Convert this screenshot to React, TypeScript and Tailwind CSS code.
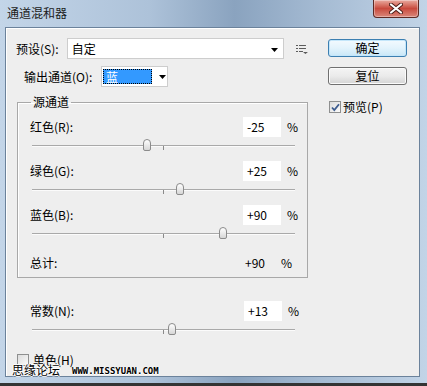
import React from "react";

// Photoshop "通道混和器" dialog on a Win7 Aero frame
const channels = [
  { label: "红色(R):", value: -25 },
  { label: "绿色(G):", value: 25 },
  { label: "蓝色(B):", value: 90 },
];

const fmt = (v: number) => (v > 0 ? `+${v}` : `${v}`);

const Arrow = ({ className = "" }: { className?: string }) => (
  <svg width="7" height="4" viewBox="0 0 7 4" className={className}>
    <path d="M0 0h7L3.5 4z" fill="#000" />
  </svg>
);

const Slider = ({ value }: { value: number }) => {
  const left = Math.round(((value + 200) / 400) * 263 - 4);
  return (
    <div className="relative ml-[14px] h-[24px] w-[263px]">
      <div className="absolute left-0 right-0 top-[8px] h-px bg-[#a9a9a9]" />
      <div className="absolute left-0 right-0 top-[9px] h-px bg-[#fbfbfb]" />
      <div className="absolute left-[131px] top-[9px] h-[4px] w-px bg-[#8a8a8a]" />
      <div
        className="absolute top-[2px] h-[12px] w-[8px] rounded-t-[4px] rounded-b-[2px] border border-[#8b8b8b] bg-gradient-to-b from-white to-[#d6d6d6]"
        style={{ left }}
      />
    </div>
  );
};

const ValueRow = ({ label, value }: { label: string; value: number }) => (
  <div className="flex h-[20px] items-center pl-[12px]">
    <span className="flex-1">{label}</span>
    <div className="h-[20px] w-[38px] bg-white pl-[4px] leading-[20px]">{fmt(value)}</div>
    <span className="ml-[6px] w-[20px]">%</span>
  </div>
);

const CheckBox = ({ checked }: { checked?: boolean }) => (
  <div className="flex h-[12px] w-[12px] items-center justify-center border border-[#8e8f8f] bg-gradient-to-br from-[#dcdcdc] to-[#fbfbfb]">
    {checked && (
      <svg width="9" height="9" viewBox="0 0 9 9">
        <path d="M1 4.5l2.3 2.6L8 1.2" stroke="#3d5c8f" strokeWidth="1.8" fill="none" />
      </svg>
    )}
  </div>
);

export default function App() {
  return (
    <div className="relative flex h-[386px] w-[427px] flex-col overflow-hidden bg-[linear-gradient(90deg,#c3d5e8_0%,#adc2d9_35%,#8aa3bf_55%,#a5bbd3_75%,#c2d4e7_100%)] font-['Noto_Sans_CJK_SC',sans-serif] text-[12px] text-black">
      {/* title bar */}
      <div className="flex h-[27px] justify-between">
        <span className="pl-[7px] pt-[5px] text-[12px] leading-[16px] text-[#1b1b1b]">通道混和器</span>
        <div className="mr-[8px] flex h-[18px] w-[46px] items-center justify-center rounded-b-[4px] border border-t-0 border-[#5e2a24] bg-gradient-to-b from-[#e8aaa0] via-[#c8493d] to-[#d9867a] shadow-[inset_0_0_0_1px_rgba(255,255,255,0.35)]">
          <svg width="14" height="11" viewBox="0 0 14 11">
            <path d="M2 1.5l10 8M12 1.5l-10 8" stroke="#4a1c17" strokeWidth="4" strokeLinecap="round" />
            <path d="M2 1.5l10 8M12 1.5l-10 8" stroke="#fff" strokeWidth="2.2" strokeLinecap="round" />
          </svg>
        </div>
      </div>

      {/* client area */}
      <div className="ml-[5px] flex h-[350px] w-[415px] border border-[#6b829b] bg-[#eeeeee] shadow-[inset_1px_1px_0_#ffffff]">
        <div className="ml-[10px] flex w-[292px] flex-col">
          <div className="mt-[10px] flex h-[21px] items-center">
            <span className="w-[51px]">预设(S):</span>
            <div className="flex h-[21px] w-[218px] items-center border border-[#cdcdcd] bg-white pl-[4px]">
              <span className="flex-1">自定</span>
              <Arrow className="mr-[5px] mt-[2px]" />
            </div>
            <svg width="12" height="10" viewBox="0 0 12 10" className="ml-[12px]">
              <g fill="#5a5a5a">
                <rect x="0" y="1" width="2" height="1" />
                <rect x="3" y="1" width="7" height="1" />
                <rect x="0" y="4" width="2" height="1" />
                <rect x="3" y="4" width="7" height="1" />
                <rect x="0" y="7" width="2" height="1" />
                <rect x="3" y="7" width="4" height="1" />
                <path d="M7 8h5l-2.5 2z" />
              </g>
            </svg>
          </div>

          <div className="mt-[7px] flex h-[21px] items-center pl-[8px]">
            <span className="w-[77px]">输出通道(O):</span>
            <div className="flex h-[21px] w-[67px] items-center border border-[#cdcdcd] bg-white">
              <div className="ml-px h-[15px] w-[49px] border border-dotted border-black bg-[#3399ff] pl-[2px] leading-[13px] text-white">蓝</div>
              <Arrow className="ml-[7px]" />
            </div>
          </div>

          <fieldset className="mt-[7px] ml-px w-[291px] border border-[#a8a8a8] pb-[4px] shadow-[inset_1px_1px_0_#ffffff]">
            <legend className="ml-[13px] px-[2px] leading-[16px]">源通道</legend>
            <div className="mt-[7px]">
              {channels.map((c) => (
                <div key={c.label}>
                  <ValueRow label={c.label} value={c.value} />
                  <Slider value={c.value} />
                </div>
              ))}
            </div>
            <div className="mt-[4px] flex h-[20px] items-center pl-[12px]">
              <span className="flex-1">总计:</span>
              <span className="w-[36px]">+90</span>
              <span className="w-[26px]">%</span>
            </div>
          </fieldset>

          <div className="ml-[2px] mt-[23px] w-[290px]">
            <ValueRow label="常数(N):" value={13} />
            <Slider value={13} />
          </div>

          <div className="mt-[8px] flex items-center gap-[4px] pl-px">
            <CheckBox />
            <span className="leading-[14px]">单色(H)</span>
          </div>
        </div>

        <div className="ml-[20px] flex w-[79px] flex-col">
          <button className="mt-[11px] h-[18px] rounded-[3px] border border-[#3c7fb1] bg-gradient-to-b from-[#f3fafe] via-[#e3f3fc] to-[#c9e7f8] leading-[16px] shadow-[inset_0_0_0_1px_#c4e6fa]">
            确定
          </button>
          <button className="mt-[10px] h-[18px] rounded-[3px] border border-[#707070] bg-gradient-to-b from-[#f4f4f4] via-[#ebebeb] to-[#d4d4d4] leading-[16px] shadow-[inset_0_0_0_1px_#fbfbfb]">
            复位
          </button>
          <div className="mt-[15px] flex items-center gap-[2px] pl-px">
            <CheckBox checked />
            <span className="leading-[14px]">预览(P)</span>
          </div>
        </div>
      </div>

      <div className="h-[6px]" />
      <div className="h-[3px] bg-[#343434]" />

      {/* watermark over the dialog */}
      <div className="absolute left-[12px] top-[362px] flex items-end gap-[12px]">
        <span className="text-[12px] leading-[16px] [text-shadow:1px_0_#fff,-1px_0_#fff,0_1px_#fff,0_-1px_#fff]">思缘论坛</span>
        <span className="mb-[2px] font-['DejaVu_Sans_Mono',monospace] text-[9px] font-bold uppercase leading-[10px] [text-shadow:1px_0_#fff,0_1px_#fff]">www.missyuan.com</span>
      </div>
    </div>
  );
}
